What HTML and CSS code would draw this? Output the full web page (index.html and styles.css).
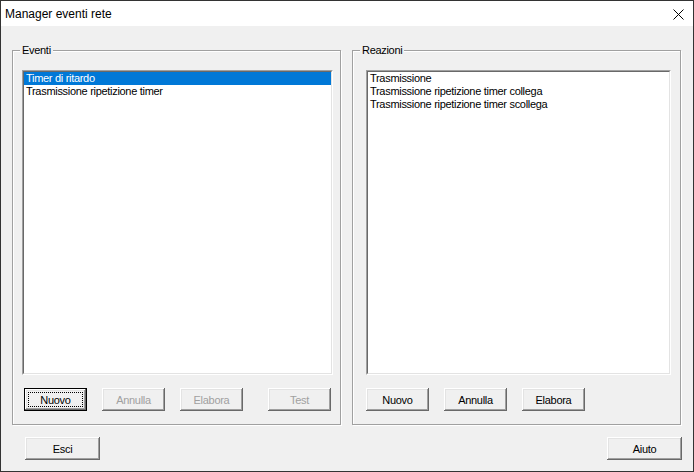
FILE: index.html
```html
<!DOCTYPE html>
<html lang="it">
<head>
    <meta charset="UTF-8">
    <title>Manager eventi rete</title>
    <link rel="stylesheet" href="styles.css">
</head>
<body>
    <!-- finestra di dialogo -->
    <div class="window">
        <div class="titlebar">
            <span class="title">Manager eventi rete</span>
            <span class="close">
                <svg width="11" height="11" viewBox="0 0 11 11">
                    <path d="M0.5 0.5 L10.5 10.5 M10.5 0.5 L0.5 10.5" stroke="#000" stroke-width="1" fill="none"/>
                </svg>
            </span>
        </div>

        <div class="client">
            <div class="groups">
                <!-- Eventi -->
                <div class="group group-left">
                    <span class="caption">Eventi</span>
                    <div class="listbox list-left">
                        <div class="list-inner">
                            <div class="item selected">Timer di ritardo</div>
                            <div class="item">Trasmissione ripetizione timer</div>
                        </div>
                    </div>
                    <div class="btn-row btn-row-left">
                        <button class="btn default"><span class="focus">Nuovo</span></button>
                        <button class="btn" disabled>Annulla</button>
                        <button class="btn" disabled>Elabora</button>
                        <button class="btn btn-test" disabled>Test</button>
                    </div>
                </div>

                <!-- Reazioni -->
                <div class="group group-right">
                    <span class="caption">Reazioni</span>
                    <div class="listbox list-right">
                        <div class="list-inner">
                            <div class="item">Trasmissione</div>
                            <div class="item">Trasmissione ripetizione timer collega</div>
                            <div class="item">Trasmissione ripetizione timer scollega</div>
                        </div>
                    </div>
                    <div class="btn-row">
                        <button class="btn">Nuovo</button>
                        <button class="btn">Annulla</button>
                        <button class="btn">Elabora</button>
                    </div>
                </div>
            </div>

            <div class="footer">
                <button class="btn btn-wide">Esci</button>
                <button class="btn btn-wide">Aiuto</button>
            </div>
        </div>
    </div>
</body>
</html>
```

FILE: styles.css
```css
/* reset */
* {
    margin: 0;
    padding: 0;
    box-sizing: border-box;
}

body {
    background: #f0f0f0;
    font-family: "Liberation Sans", Arial, sans-serif;
    font-size: 11px;
    letter-spacing: -0.3px;
    color: #000;
}

/* finestra */
.window {
    width: 694px;
    height: 472px;
    border: 1px solid #333;
    background: #f0f0f0;
    display: flex;
    flex-direction: column;
}

.titlebar {
    height: 25px;
    background: #fff;
    display: flex;
    align-items: center;
    justify-content: space-between;
    padding: 0 9px 0 4px;
}

.title {
    font-size: 12px;
    letter-spacing: 0;
    line-height: 14px;
    padding-top: 1px;
}

.close {
    display: flex;
    margin-top: 1px;
}

/* area client */
.client {
    padding: 24px 12px 0 11px;
}

.groups {
    display: flex;
    gap: 11px;
}

/* group box */
.group {
    position: relative;
    width: 329px;
    height: 375px;
    border: 1px solid #a0a0a0;
    box-shadow: 1px 1px 0 #fff, inset 1px 1px 0 #fff;
}

.group-left {
    padding: 19px 7px 0 9px;
}

.group-right {
    padding: 19px 9px 0 13px;
}

.caption {
    position: absolute;
    top: -7px;
    left: 7px;
    padding: 0 2px;
    line-height: 13px;
    background: #f0f0f0;
}

/* listbox */
.listbox {
    height: 305px;
    background: #fff;
    border: 1px solid;
    border-color: #a0a0a0 #fff #fff #a0a0a0;
}

.list-inner {
    height: 100%;
    border: 1px solid;
    border-color: #696969 #e3e3e3 #e3e3e3 #696969;
}

.list-left {
    width: 311px;
}

.list-right {
    width: 305px;
}

.item {
    height: 13px;
    line-height: 13px;
    padding-left: 2px;
    white-space: nowrap;
}

.item.selected {
    background: #0078d7;
    color: #fff;
}

/* pulsanti */
.btn-row {
    display: flex;
    gap: 15px;
    margin-top: 13px;
}

.btn-row-left {
    padding-left: 2px;
}

.btn-test {
    margin-left: 10px;
}

.btn {
    width: 63px;
    height: 23px;
    border: none;
    background: #f0f0f0;
    font-family: "Liberation Sans", Arial, sans-serif;
    font-size: 11px;
    letter-spacing: -0.3px;
    color: #000;
    display: flex;
    align-items: center;
    justify-content: center;
    box-shadow:
        inset -1px -1px 0 #696969,
        inset 1px 1px 0 #fff,
        inset -2px -2px 0 #a0a0a0,
        inset 2px 2px 0 #e3e3e3;
}

.btn:disabled {
    color: #a0a0a0;
}

.btn.default {
    box-shadow:
        inset 0 0 0 1px #000,
        inset -2px -2px 0 #696969,
        inset 2px 2px 0 #fff,
        inset -3px -3px 0 #a0a0a0,
        inset 3px 3px 0 #e3e3e3;
}

.focus {
    width: 55px;
    height: 15px;
    border: 1px dotted #000;
    display: flex;
    align-items: center;
    justify-content: center;
}

.btn-wide {
    width: 75px;
}

.footer {
    display: flex;
    justify-content: space-between;
    margin: 12px -1px 0 13px;
}
```
